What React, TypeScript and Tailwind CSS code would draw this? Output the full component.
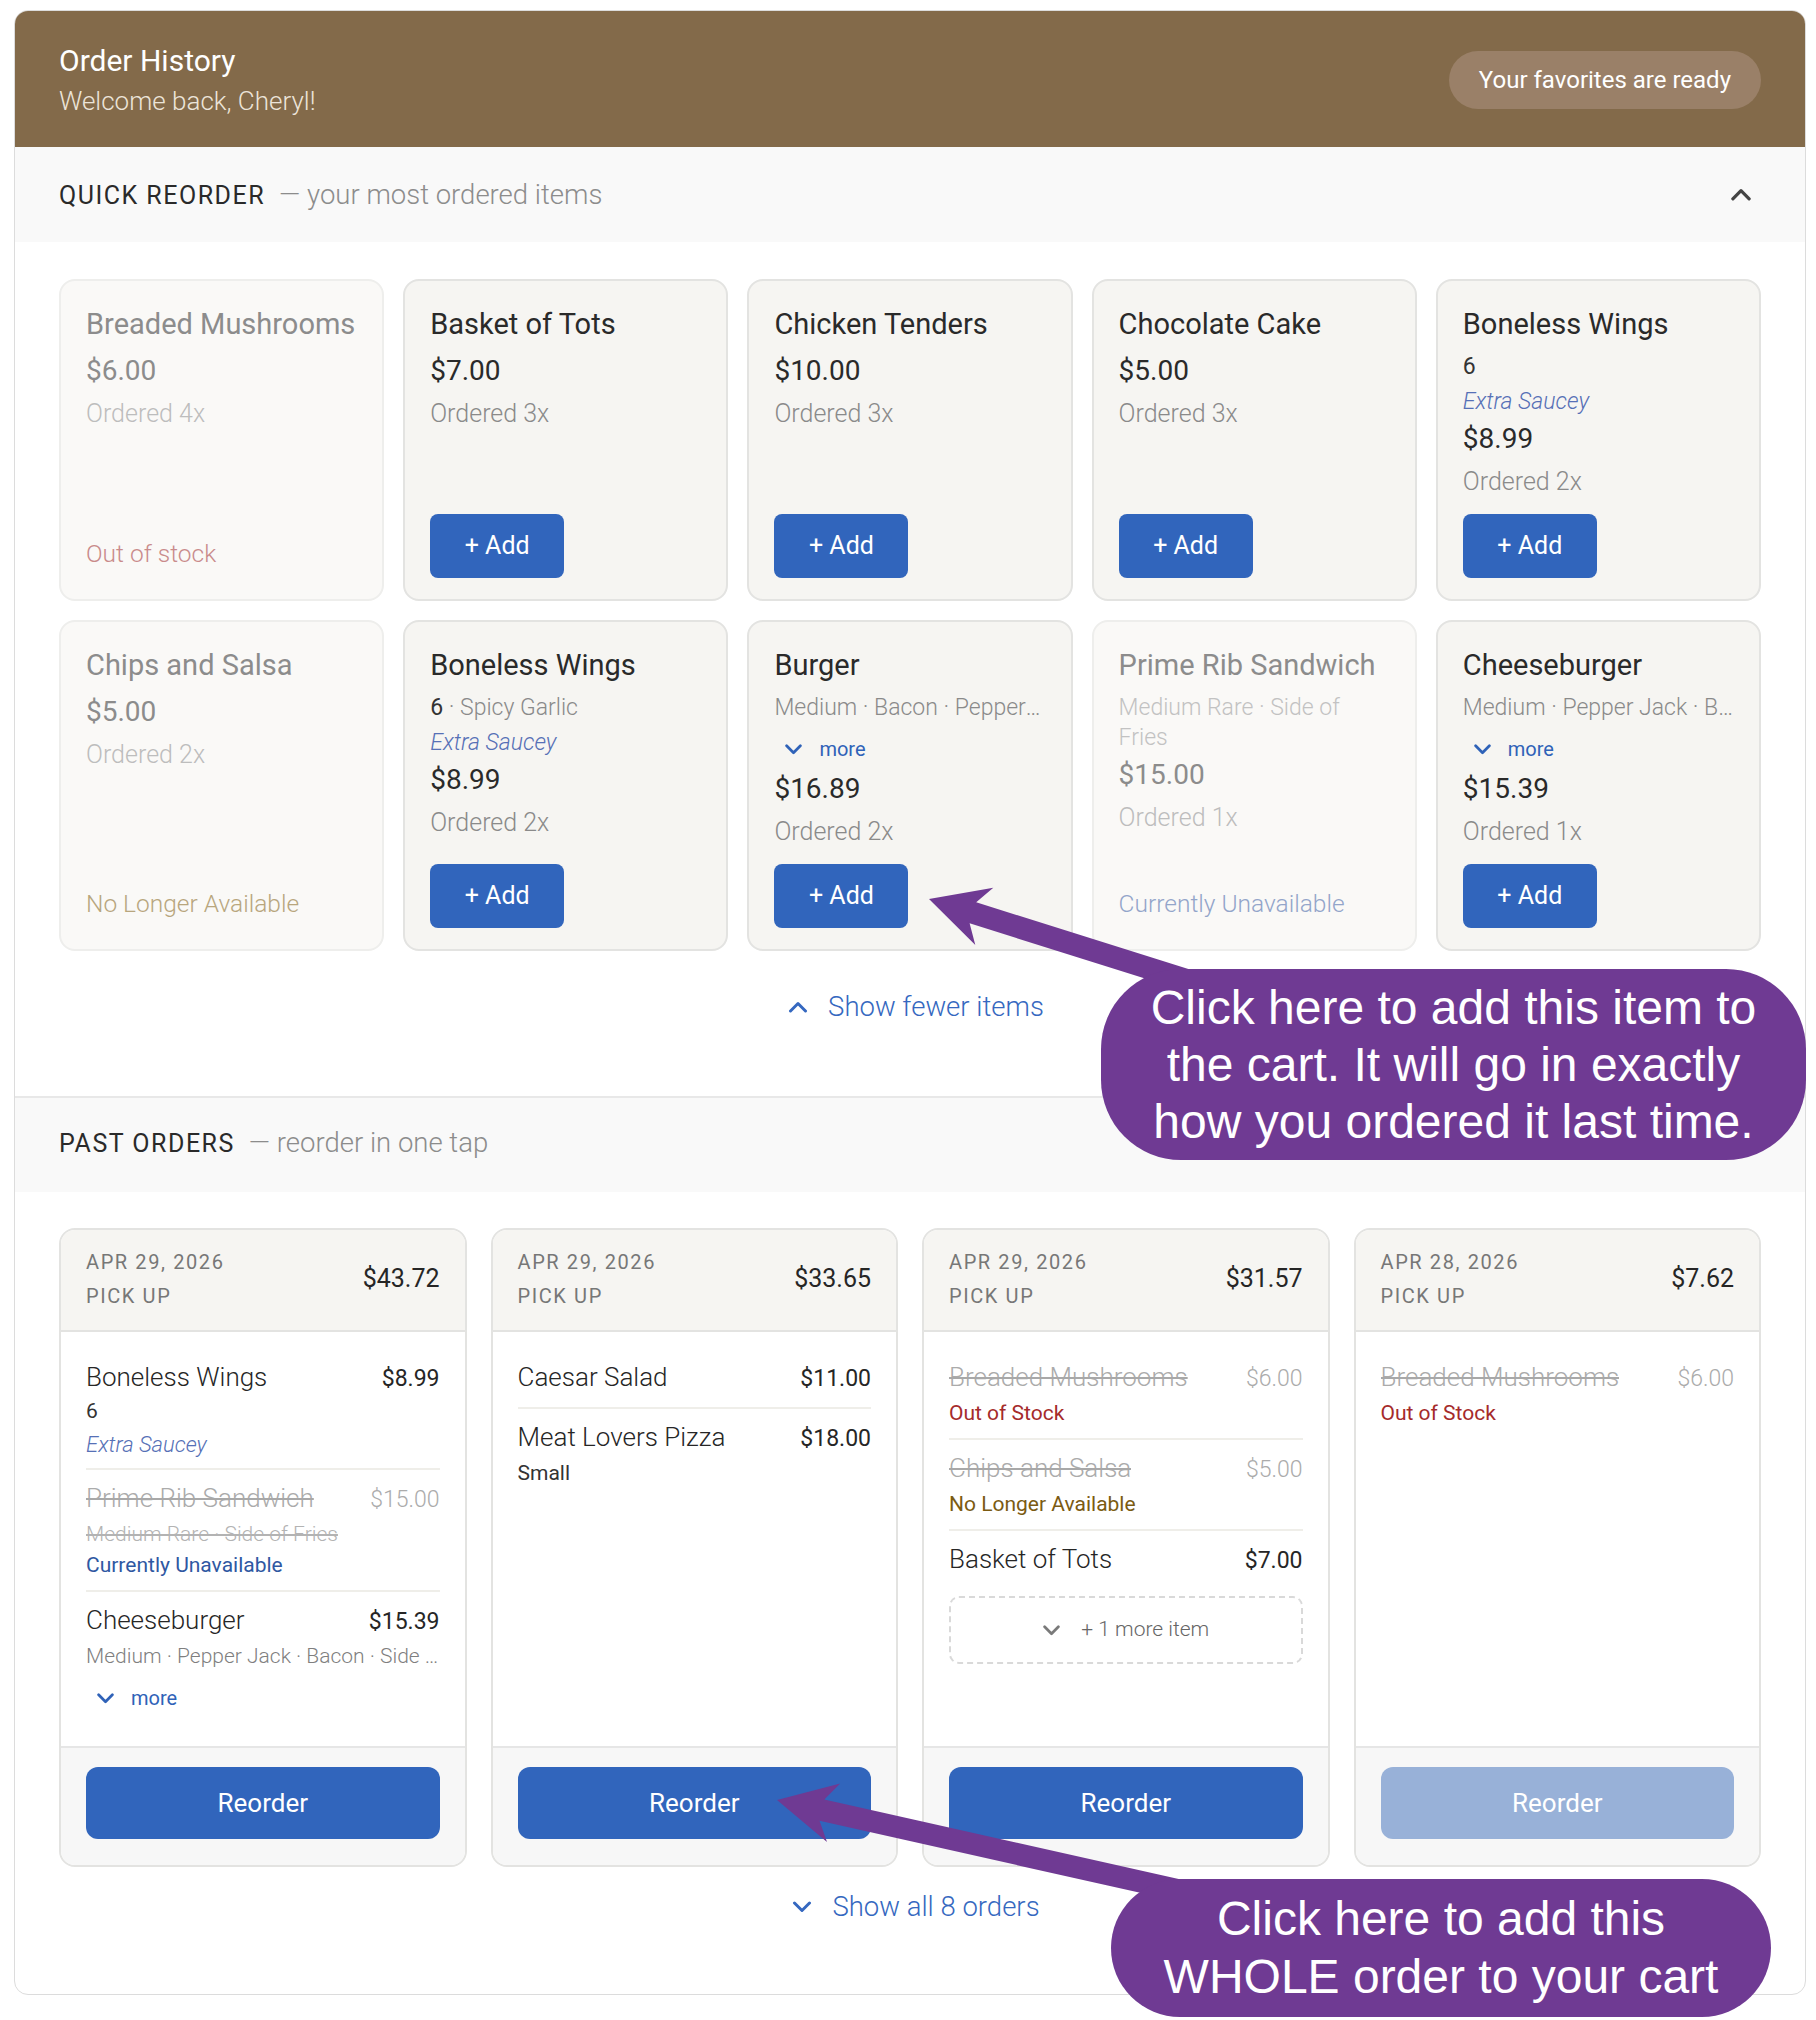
import clsx from 'clsx'

type Status = 'oos' | 'nla' | 'cu'

interface QuickItem {
  name: string
  price: string
  ordered: string
  lead?: string
  mods?: string
  clip?: boolean
  extra?: string
  more?: boolean
  status?: Status
}

interface OrderLine {
  name: string
  price: string
  off?: boolean
  sub?: string
  subTone?: 'dark' | 'muted' | 'struck'
  extra?: string
  note?: Status
  more?: boolean
}

interface Order {
  date: string
  total: string
  lines: OrderLine[]
  hiddenCount?: number
  disabled?: boolean
}

const quickItems: QuickItem[] = [
  { name: 'Breaded Mushrooms', price: '$6.00', ordered: 'Ordered 4x', status: 'oos' },
  { name: 'Basket of Tots', price: '$7.00', ordered: 'Ordered 3x' },
  { name: 'Chicken Tenders', price: '$10.00', ordered: 'Ordered 3x' },
  { name: 'Chocolate Cake', price: '$5.00', ordered: 'Ordered 3x' },
  { name: 'Boneless Wings', lead: '6', extra: 'Extra Saucey', price: '$8.99', ordered: 'Ordered 2x' },
  { name: 'Chips and Salsa', price: '$5.00', ordered: 'Ordered 2x', status: 'nla' },
  { name: 'Boneless Wings', lead: '6', mods: 'Spicy Garlic', extra: 'Extra Saucey', price: '$8.99', ordered: 'Ordered 2x' },
  { name: 'Burger', mods: 'Medium · Bacon · Pepper Jack · Side of Fries', clip: true, more: true, price: '$16.89', ordered: 'Ordered 2x' },
  { name: 'Prime Rib Sandwich', mods: 'Medium Rare · Side of\nFries', price: '$15.00', ordered: 'Ordered 1x', status: 'cu' },
  { name: 'Cheeseburger', mods: 'Medium · Pepper Jack · Bacon · Side of Fries', clip: true, more: true, price: '$15.39', ordered: 'Ordered 1x' },
]

const orders: Order[] = [
  {
    date: 'APR 29, 2026',
    total: '$43.72',
    lines: [
      { name: 'Boneless Wings', price: '$8.99', sub: '6', subTone: 'dark', extra: 'Extra Saucey' },
      { name: 'Prime Rib Sandwich', price: '$15.00', off: true, sub: 'Medium Rare · Side of Fries', subTone: 'struck', note: 'cu' },
      { name: 'Cheeseburger', price: '$15.39', sub: 'Medium · Pepper Jack · Bacon · Side of Fries', subTone: 'muted', more: true },
    ],
  },
  {
    date: 'APR 29, 2026',
    total: '$33.65',
    lines: [
      { name: 'Caesar Salad', price: '$11.00' },
      { name: 'Meat Lovers Pizza', price: '$18.00', sub: 'Small', subTone: 'dark' },
    ],
  },
  {
    date: 'APR 29, 2026',
    total: '$31.57',
    lines: [
      { name: 'Breaded Mushrooms', price: '$6.00', off: true, note: 'oos' },
      { name: 'Chips and Salsa', price: '$5.00', off: true, note: 'nla' },
      { name: 'Basket of Tots', price: '$7.00' },
    ],
    hiddenCount: 1,
  },
  {
    date: 'APR 28, 2026',
    total: '$7.62',
    lines: [{ name: 'Breaded Mushrooms', price: '$6.00', off: true, note: 'oos' }],
    disabled: true,
  },
]

const quickStatus: Record<Status, { label: string; cls: string }> = {
  oos: { label: 'Out of stock', cls: 'text-[#c98b8b]' },
  nla: { label: 'No Longer Available', cls: 'text-[#b8a67e]' },
  cu: { label: 'Currently Unavailable', cls: 'text-[#93a5ca]' },
}

const orderNote: Record<Status, { label: string; cls: string }> = {
  oos: { label: 'Out of Stock', cls: 'text-[#a52b2b]' },
  nla: { label: 'No Longer Available', cls: 'text-[#7b5b12]' },
  cu: { label: 'Currently Unavailable', cls: 'text-[#2f58a2]' },
}

function ChevronDown({ className }: { className?: string }) {
  return (
    <svg viewBox="0 0 20 12" className={className} fill="none" stroke="currentColor" strokeWidth={3} strokeLinecap="round" strokeLinejoin="round">
      <polyline points="2.5,2 10,9.5 17.5,2" />
    </svg>
  )
}

function ChevronUp({ className }: { className?: string }) {
  return (
    <svg viewBox="0 0 20 12" className={className} fill="none" stroke="currentColor" strokeWidth={3} strokeLinecap="round" strokeLinejoin="round">
      <polyline points="2.5,10 10,2.5 17.5,10" />
    </svg>
  )
}

function MoreToggle({ className }: { className?: string }) {
  return (
    <div className={clsx('flex h-[30px] items-center pl-[10px] text-[20px] text-[#2f62b8]', className)}>
      <ChevronDown className="h-[11px] w-[19px]" />
      <span className="ml-[16px]">more</span>
    </div>
  )
}

function QuickCard({ item }: { item: QuickItem }) {
  const off = !!item.status
  const hasMods = !!(item.lead || item.mods)
  let priceGap = 'mt-[11px]'
  if (item.more) priceGap = 'mt-[7px]'
  else if (hasMods || item.extra) priceGap = 'mt-[4px]'

  return (
    <div
      className={clsx(
        'flex flex-col rounded-[16px] border-2 px-[25px] pt-[25px] pb-[21px]',
        off ? 'border-[#eeeeec] bg-[#faf9f7]' : 'border-[#e3e3e1] bg-[#f6f5f2]',
      )}
    >
      <h3 className={clsx('whitespace-nowrap text-[29px] leading-[36px]', off ? 'text-[#8c8c8c]' : 'text-[#2a2a2a]')}>
        {item.name}
      </h3>

      {hasMods && (
        <p
          className={clsx(
            'mt-[10px] text-[23px] leading-[30px] font-light',
            item.clip ? 'truncate' : 'whitespace-pre-line',
            off ? 'text-[#c2c2c2]' : 'text-[#8a8a8a]',
          )}
        >
          {item.lead && <span className="font-normal text-[#333333]">{item.lead}</span>}
          {item.lead && item.mods && ' · '}
          {item.mods}
        </p>
      )}

      {item.extra && (
        <p className="mt-[5px] text-[23px] leading-[30px] font-light italic text-[#5670b6]">{item.extra}</p>
      )}

      {item.more && <MoreToggle className="mt-[11px]" />}

      <p className={clsx(priceGap, 'text-[28px] leading-[36px]', off ? 'text-[#8c8c8c]' : 'text-[#2a2a2a]')}>{item.price}</p>
      <p className={clsx('mt-[9px] text-[25px] leading-[32px] font-light', off ? 'text-[#bdbdbd]' : 'text-[#8a8a8a]')}>
        {item.ordered}
      </p>

      {item.status ? (
        <p className={clsx('mt-auto mb-[8px] pt-[16px] text-[24.5px] leading-[32px] font-light', quickStatus[item.status].cls)}>
          {quickStatus[item.status].label}
        </p>
      ) : (
        <div className="mt-auto pt-[16px]">
          <button className="h-[64px] w-[134px] rounded-[8px] bg-[#3165bc] text-[25px] text-white">+ Add</button>
        </div>
      )}
    </div>
  )
}

function OrderLineRow({ line, first }: { line: OrderLine; first: boolean }) {
  return (
    <div className={clsx('py-[11px]', !first && 'border-t-2 border-[#efeee9]', first && line.extra && 'pb-[9px]')}>
      <div className="flex items-baseline justify-between gap-4">
        <span
          className={clsx(
            'truncate text-[26px] leading-[34px] font-light',
            line.off ? 'text-[#ababab] line-through decoration-2 decoration-[#a8a8a8]' : 'text-[#262626]',
          )}
        >
          {line.name}
        </span>
        <span className={clsx('shrink-0 text-[23px] leading-[34px]', line.off ? 'font-light text-[#ababab]' : 'text-[#262626]')}>
          {line.price}
        </span>
      </div>

      {line.sub && (
        <p
          className={clsx(
            'truncate text-[21px] leading-[28px]',
            line.extra ? 'mt-[1px]' : 'mt-[3px]',
            line.subTone === 'dark' && 'text-[#333333]',
            line.subTone === 'muted' && 'font-light text-[#7f7f7f]',
            line.subTone === 'struck' && 'font-light text-[#b3b3b3] line-through',
          )}
        >
          {line.sub}
        </p>
      )}

      {line.extra && (
        <p className="mt-[6px] text-[22px] leading-[28px] font-light italic text-[#5670b6]">{line.extra}</p>
      )}

      {line.note && (
        <p className="mt-[3px] text-[21px] leading-[28px]">
          <span className={orderNote[line.note].cls}>{orderNote[line.note].label}</span>
        </p>
      )}

      {line.more && (
        <div className="mt-[14px] flex h-[28px] items-center pl-[10px] text-[20px] text-[#2f62b8]">
          <ChevronDown className="h-[11px] w-[19px]" />
          <span className="ml-[16px]">more</span>
        </div>
      )}
    </div>
  )
}

function OrderCard({ order }: { order: Order }) {
  return (
    <div className="flex flex-col overflow-hidden rounded-[16px] border-2 border-[#e3e3e1] bg-white">
      {/* Date / type / total */}
      <div className="flex items-center justify-between border-b-2 border-[#e3e3e1] bg-[#f6f5f2] px-[25px] pt-[15px] pb-[17px]">
        <div className="text-[20px] leading-[34px] tracking-[1.6px] text-[#777777]">
          <p>{order.date}</p>
          <p>PICK UP</p>
        </div>
        <p className="text-[25px] text-[#262626]">{order.total}</p>
      </div>

      <div className="flex-1 px-[25px] pt-[17px] pb-[23px]">
        {order.lines.map((line, i) => (
          <OrderLineRow key={line.name + i} line={line} first={i === 0} />
        ))}
        {order.hiddenCount && (
          <div className="mt-[7px] flex h-[68px] items-center justify-center rounded-[10px] border-2 border-dashed border-[#d9d9d9] text-[21px] font-light text-[#666666]">
            <ChevronDown className="h-[11px] w-[19px] text-[#7a7a7a]" />
            <span className="ml-[20px]">+ {order.hiddenCount} more item</span>
          </div>
        )}
      </div>

      <div className="border-t-2 border-[#e6e6e6] bg-[#f7f7f7] px-[25px] pt-[19px] pb-[26px]">
        <button
          className={clsx(
            'h-[72px] w-full rounded-[12px] text-[26px] text-white',
            order.disabled ? 'bg-[#98b1d8]' : 'bg-[#3165bc]',
          )}
        >
          Reorder
        </button>
      </div>
    </div>
  )
}

function SectionBand({ title, hint, top, collapsible }: { title: string; hint: string; top?: boolean; collapsible?: boolean }) {
  return (
    <div
      className={clsx(
        'flex items-center justify-between bg-[#f9f9f9] px-[44px]',
        top ? 'h-[95px]' : 'h-[96px] border-t-2 border-[#e8e8e8]',
      )}
    >
      <p className={clsx('leading-[32px]', top && 'mt-[4px]')}>
        <span className="text-[25px] tracking-[1.5px] text-[#2a2a2a]">{title}</span>
        <span className="ml-[14px] text-[27.5px] font-light text-[#8c8c8c]">— {hint}</span>
      </p>
      {collapsible && <ChevronUp className="mr-[9px] h-[13px] w-[22px] text-[#444444]" />}
    </div>
  )
}

function Arrows() {
  return (
    <svg className="pointer-events-none absolute left-0 top-0" width={1816} height={2020} viewBox="0 0 1816 2020">
      <polygon
        fill="#6f3a93"
        points="929,899 993.3,887.8 976.2,902.3 1218.5,978.5 1211.9,999.5 969.6,923.3 975.3,945"
      />
      <polygon
        fill="#6f3a93"
        points="777,1800 840.2,1783.4 824.3,1799.4 1208.7,1885.7 1203.9,1907.1 819.5,1820.8 827,1842"
      />
    </svg>
  )
}

export default function App() {
  return (
    <div className="relative min-h-[2020px] bg-white pl-[14px] pt-[10px] [font-family:Roboto,'Noto_Sans',sans-serif]">
      <div className="w-[1792px] overflow-hidden rounded-[14px] border border-[#dcdcdc]">
        {/* Header */}
        <div className="flex items-center justify-between bg-[#836a4a] px-[44px] pt-[31px] pb-[30px]">
          <div>
            <h1 className="text-[30px] leading-[38px] text-white">Order History</h1>
            <p className="mt-[5px] text-[26px] leading-[32px] font-light text-[#ece4d9]">Welcome back, Cheryl!</p>
          </div>
          <div className="flex h-[58px] items-center rounded-full bg-[#9a8068] px-[30px] text-[24px] text-white">
            Your favorites are ready
          </div>
        </div>

        <SectionBand title="QUICK REORDER" hint="your most ordered items" top collapsible />

        <div className="px-[44px] pt-[37px] pb-[71px]">
          <div className="grid grid-cols-5 gap-[19px]">
            {quickItems.map((item, i) => (
              <QuickCard key={item.name + i} item={item} />
            ))}
          </div>
          <div className="mt-[38px] flex items-center justify-center pl-[12px] text-[27.5px] leading-[36px] font-light text-[#3568c0]">
            <ChevronUp className="h-[12px] w-[20px]" />
            <span className="ml-[20px]">Show fewer items</span>
          </div>
        </div>

        <SectionBand title="PAST ORDERS" hint="reorder in one tap" />

        <div className="px-[44px] pt-[36px] pb-[69px]">
          <div className="grid grid-cols-4 gap-[24px]">
            {orders.map((order, i) => (
              <OrderCard key={i} order={order} />
            ))}
          </div>
          <div className="mt-[22px] flex items-center justify-center pl-[12px] text-[27.5px] leading-[36px] font-light text-[#3568c0]">
            <ChevronDown className="h-[12px] w-[20px]" />
            <span className="ml-[20px]">Show all 8 orders</span>
          </div>
        </div>
      </div>

      <Arrows />

      {/* Callouts */}
      <div className="absolute left-[1101px] top-[969px] flex h-[191px] w-[705px] flex-col items-center justify-center rounded-[80px] bg-[#6f3a93] text-[48px] leading-[57px] text-white [font-family:'Liberation_Sans',Arial,sans-serif]">
        <span className="whitespace-nowrap">Click here to add this item to</span>
        <span className="whitespace-nowrap">the cart. It will go in exactly</span>
        <span className="whitespace-nowrap">how you ordered it last time.</span>
      </div>
      <div className="absolute left-[1111px] top-[1879px] flex h-[138px] w-[660px] flex-col items-center justify-center rounded-[69px] bg-[#6f3a93] text-[48px] leading-[58px] text-white [font-family:'Liberation_Sans',Arial,sans-serif]">
        <span className="whitespace-nowrap">Click here to add this</span>
        <span className="whitespace-nowrap">WHOLE order to your cart</span>
      </div>
    </div>
  )
}
